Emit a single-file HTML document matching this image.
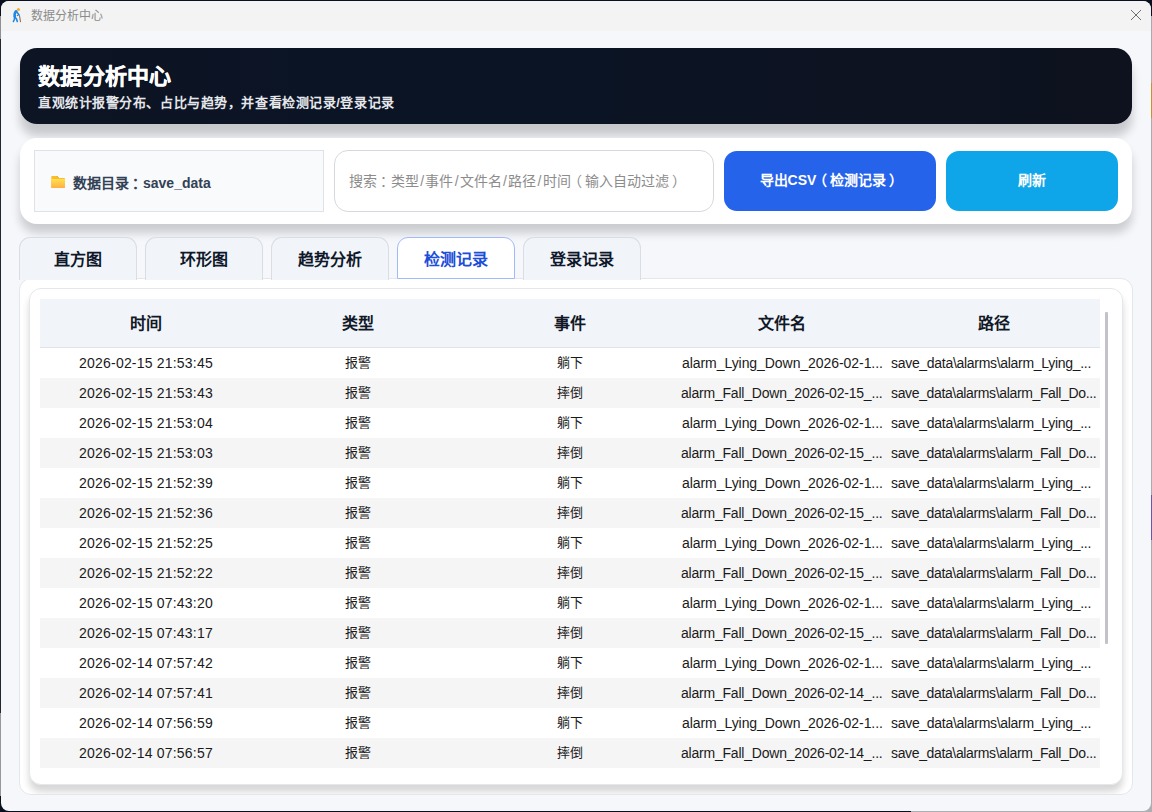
<!DOCTYPE html>
<html lang="zh-CN">
<head>
<meta charset="utf-8">
<title>数据分析中心</title>
<style>
*{box-sizing:border-box;margin:0;padding:0}
html,body{width:1152px;height:812px;overflow:hidden}
body{font-family:"Liberation Sans",sans-serif;background:#0a1020;position:relative;color:#111827}
.abs{position:absolute}
.e{position:absolute;width:1px}
#win{left:1px;top:1px;width:1150px;height:810px;border-radius:8px;background:#f5f7fb;overflow:hidden}
#titlebar{left:0;top:0;width:1150px;height:30px;background:#f3f3f3}
#titletext{left:30px;top:0;height:30px;line-height:30px;font-size:12px;color:#8b8b8b;white-space:nowrap}
#banner{left:19px;top:47px;width:1112px;height:76px;border-radius:17px;background:linear-gradient(90deg,#0d1424 0%,#0a1425 45%,#0c1322 62%,#0e121f 100%);box-shadow:0 12px 10px rgba(0,0,0,.19)}
#banner h1{position:absolute;left:18px;top:13px;font-size:22px;line-height:32px;font-weight:700;color:#fff;white-space:nowrap;letter-spacing:.3px;-webkit-text-stroke:.35px #fff}
#banner p{position:absolute;left:18px;top:45px;font-size:13px;line-height:20px;font-weight:700;color:#e5e7eb;white-space:nowrap;letter-spacing:.56px}
#bar{left:19px;top:137px;width:1112px;height:86px;border-radius:17px;background:#fff;box-shadow:0 9px 10px rgba(0,0,0,.175)}
#dir{left:14px;top:12px;width:290px;height:62px;background:#f8fafc;border:1px solid #dfe2e7;font-size:14px;font-weight:700;color:#334155;white-space:nowrap}
#dir span.t{position:absolute;left:38px;top:1px;line-height:62px}
#search{left:314px;top:12px;width:380px;height:62px;border-radius:14px;background:#fff;border:1px solid #d6d8dd;font-size:14px;color:#8c8c8c;line-height:60px;padding-left:14px;white-space:nowrap}
.sl{margin:0 1.25px}
.qc{position:relative;left:3px}.ql{position:relative;left:-3px}.qr{position:relative;left:3px}
.btn{top:13px;height:60px;border-radius:13px;color:#fff;font-size:14px;font-weight:700;text-align:center;line-height:59px;white-space:nowrap}
#b1{left:704px;width:212px;background:#2563eb}
#b2{left:926px;width:172px;background:#0ea5e9}
.tab{top:236px;z-index:2;width:118px;height:43px;border:1px solid #dadee4;border-bottom:none;border-radius:11px 11px 0 0;background:#f1f5f9;font-size:16px;font-weight:700;color:#0f172a;text-align:center;line-height:43px;white-space:nowrap}
.tab.on{height:42px;background:#fff;border:1px solid #9dbcf8;color:#1d4ed8}
#pane{left:18px;top:277px;width:1114px;height:517px;border-radius:12px;background:#fff;border:1px solid #e3e6ea;overflow:hidden}
#card{left:9px;top:9px;width:1094px;height:497px;border-radius:12px;background:#fff;border:1px solid #e6e7ea;box-shadow:0 7px 7px rgba(0,0,0,.16)}
#tbl{left:39px;top:298px;width:1060px;height:470px;background:#fff;overflow:hidden}
#thead{left:0;top:0;width:1060px;height:49px;background:#f1f5f9;border-bottom:1px solid #dfe4ea}
.th{position:absolute;top:0;width:212px;height:48px;line-height:49px;text-align:center;font-size:16px;font-weight:700;color:#111827}
.row{position:absolute;left:0;width:1060px;height:30px}
.row.alt{background:#f5f5f5}
.c{position:absolute;top:0;width:212px;height:30px;line-height:30px;text-align:center;font-size:14px;color:#1a1a1a;white-space:nowrap;overflow:hidden}
.dt{letter-spacing:.2px}
.k{font-size:13px}
.t{text-align:left;width:auto;overflow:visible}
.fl{left:642px;letter-spacing:-.06px}.ff{left:641px;letter-spacing:-.21px}
.pl{left:851px;letter-spacing:-.3px}.pf{left:851px;letter-spacing:-.36px}
#sb{left:1104px;top:311px;width:3px;height:332px;background:#c2c2c8;border-radius:1px}
</style>
</head>
<body>
<div class="e" style="left:0;top:16px;height:23px;background:#8f9094"></div>
<div class="e" style="left:0;top:39px;height:674px;background:#24272d"></div>
<div class="e" style="left:0;top:713px;height:83px;background:#97989b"></div>
<div class="e" style="left:1151px;top:16px;height:796px;background:#a9aaad"></div>
<div class="abs" style="left:911px;top:811px;width:241px;height:1px;background:#adaeb1"></div>
<div class="abs" style="left:1142px;top:802px;width:10px;height:10px;background:#adaeb1"></div>
<div class="e" style="left:1151px;top:83px;height:35px;background:#c4952f"></div>
<div class="e" style="left:1151px;top:495px;height:45px;background:#6c55ad"></div>
<div id="win" class="abs">
  <div id="titlebar" class="abs"></div>
  <svg class="abs" style="left:7px;top:3px" width="20" height="22" viewBox="8 4 20 22"><g fill="none" stroke-linecap="round" stroke-linejoin="round"><path d="M19.6 16.4L20.5 21.6" stroke="#8d6e63" stroke-width="1.1"/><circle cx="17.4" cy="15.5" r=".7" fill="#8d6e63" stroke="none"/><path d="M15.9 11.4C14.9 12.6 14.4 14.5 14.6 16.3" stroke="#1e88e5" stroke-width="2.7"/><path d="M16.4 11.3L19.2 15.3" stroke="#1e88e5" stroke-width="1.5"/><path d="M14.8 16.6L16.6 19.2L17.3 21.5" stroke="#1e88e5" stroke-width="1.6"/><path d="M14.7 17L14.4 19.2L13.4 21.5" stroke="#1e88e5" stroke-width="1.6"/><circle cx="18.4" cy="9.55" r="1.55" fill="#ffa726" stroke="none"/></g></svg>
  <div id="titletext" class="abs">数据分析中心</div>
  <svg class="abs" style="left:1129px;top:8px" width="12" height="12" viewBox="0 0 12 12"><path d="M1 1L11 11M11 1L1 11" stroke="#6f6f6f" stroke-width="1" fill="none"/></svg>
  <div id="banner" class="abs"><h1>数据分析中心</h1><p>直观统计报警分布、占比与趋势，并查看检测记录/登录记录</p></div>
  <div id="bar" class="abs">
    <div id="dir" class="abs">
      <svg class="abs" style="left:15px;top:24px" width="16" height="14" viewBox="0 0 16 14"><defs><linearGradient id="fg" x1="0" y1="0" x2="0" y2="1"><stop offset="0" stop-color="#ffe54a"/><stop offset=".25" stop-color="#ffd54f"/><stop offset="1" stop-color="#ffb041"/></linearGradient></defs><path d="M1.3 1.4Q1.3.9 1.8.9H7.3L9 3H14.4Q14.9 3 14.9 3.5V12.4Q14.9 12.9 14.4 12.9H1.8Q1.3 12.9 1.3 12.4Z" fill="#fcbc2e"/><path d="M6.2.9H7.3L9 3H7.9Z" fill="#e5ad2c"/><rect x="1.3" y="3.9" width="13.6" height="9" rx=".5" fill="url(#fg)"/></svg>
      <span class="t">数据目录<span class="qc">：</span>save_data</span>
    </div>
    <div id="search" class="abs">搜索<span class="qc">：</span>类型<span class="sl">/</span>事件<span class="sl">/</span>文件名<span class="sl">/</span>路径<span class="sl">/</span>时间<span class="ql">（</span>输入自动过滤<span class="qr">）</span></div>
    <div id="b1" class="abs btn">导出CSV<span class="ql">（</span>检测记录<span class="qr">）</span></div>
    <div id="b2" class="abs btn">刷新</div>
  </div>
  <div class="abs tab" style="left:18px">直方图</div>
  <div class="abs tab" style="left:144px">环形图</div>
  <div class="abs tab" style="left:270px">趋势分析</div>
  <div class="abs tab on" style="left:396px">检测记录</div>
  <div class="abs tab" style="left:522px">登录记录</div>
  <div id="pane" class="abs"><div id="card" class="abs"></div></div>
  <div id="tbl" class="abs">
    <div id="thead" class="abs">
      <div class="th" style="left:0">时间</div><div class="th" style="left:212px">类型</div><div class="th" style="left:424px">事件</div><div class="th" style="left:636px">文件名</div><div class="th" style="left:848px">路径</div>
    </div>
    <div class="row" style="top:49px"><div class="c dt" style="left:0">2026-02-15 21:53:45</div><div class="c k" style="left:212px">报警</div><div class="c k" style="left:424px">躺下</div><div class="c t fl">alarm_Lying_Down_2026-02-1...</div><div class="c t pl">save_data\alarms\alarm_Lying_...</div></div>
    <div class="row alt" style="top:79px"><div class="c dt" style="left:0">2026-02-15 21:53:43</div><div class="c k" style="left:212px">报警</div><div class="c k" style="left:424px">摔倒</div><div class="c t ff">alarm_Fall_Down_2026-02-15_...</div><div class="c t pf">save_data\alarms\alarm_Fall_Do...</div></div>
    <div class="row" style="top:109px"><div class="c dt" style="left:0">2026-02-15 21:53:04</div><div class="c k" style="left:212px">报警</div><div class="c k" style="left:424px">躺下</div><div class="c t fl">alarm_Lying_Down_2026-02-1...</div><div class="c t pl">save_data\alarms\alarm_Lying_...</div></div>
    <div class="row alt" style="top:139px"><div class="c dt" style="left:0">2026-02-15 21:53:03</div><div class="c k" style="left:212px">报警</div><div class="c k" style="left:424px">摔倒</div><div class="c t ff">alarm_Fall_Down_2026-02-15_...</div><div class="c t pf">save_data\alarms\alarm_Fall_Do...</div></div>
    <div class="row" style="top:169px"><div class="c dt" style="left:0">2026-02-15 21:52:39</div><div class="c k" style="left:212px">报警</div><div class="c k" style="left:424px">躺下</div><div class="c t fl">alarm_Lying_Down_2026-02-1...</div><div class="c t pl">save_data\alarms\alarm_Lying_...</div></div>
    <div class="row alt" style="top:199px"><div class="c dt" style="left:0">2026-02-15 21:52:36</div><div class="c k" style="left:212px">报警</div><div class="c k" style="left:424px">摔倒</div><div class="c t ff">alarm_Fall_Down_2026-02-15_...</div><div class="c t pf">save_data\alarms\alarm_Fall_Do...</div></div>
    <div class="row" style="top:229px"><div class="c dt" style="left:0">2026-02-15 21:52:25</div><div class="c k" style="left:212px">报警</div><div class="c k" style="left:424px">躺下</div><div class="c t fl">alarm_Lying_Down_2026-02-1...</div><div class="c t pl">save_data\alarms\alarm_Lying_...</div></div>
    <div class="row alt" style="top:259px"><div class="c dt" style="left:0">2026-02-15 21:52:22</div><div class="c k" style="left:212px">报警</div><div class="c k" style="left:424px">摔倒</div><div class="c t ff">alarm_Fall_Down_2026-02-15_...</div><div class="c t pf">save_data\alarms\alarm_Fall_Do...</div></div>
    <div class="row" style="top:289px"><div class="c dt" style="left:0">2026-02-15 07:43:20</div><div class="c k" style="left:212px">报警</div><div class="c k" style="left:424px">躺下</div><div class="c t fl">alarm_Lying_Down_2026-02-1...</div><div class="c t pl">save_data\alarms\alarm_Lying_...</div></div>
    <div class="row alt" style="top:319px"><div class="c dt" style="left:0">2026-02-15 07:43:17</div><div class="c k" style="left:212px">报警</div><div class="c k" style="left:424px">摔倒</div><div class="c t ff">alarm_Fall_Down_2026-02-15_...</div><div class="c t pf">save_data\alarms\alarm_Fall_Do...</div></div>
    <div class="row" style="top:349px"><div class="c dt" style="left:0">2026-02-14 07:57:42</div><div class="c k" style="left:212px">报警</div><div class="c k" style="left:424px">躺下</div><div class="c t fl">alarm_Lying_Down_2026-02-1...</div><div class="c t pl">save_data\alarms\alarm_Lying_...</div></div>
    <div class="row alt" style="top:379px"><div class="c dt" style="left:0">2026-02-14 07:57:41</div><div class="c k" style="left:212px">报警</div><div class="c k" style="left:424px">摔倒</div><div class="c t ff">alarm_Fall_Down_2026-02-14_...</div><div class="c t pf">save_data\alarms\alarm_Fall_Do...</div></div>
    <div class="row" style="top:409px"><div class="c dt" style="left:0">2026-02-14 07:56:59</div><div class="c k" style="left:212px">报警</div><div class="c k" style="left:424px">躺下</div><div class="c t fl">alarm_Lying_Down_2026-02-1...</div><div class="c t pl">save_data\alarms\alarm_Lying_...</div></div>
    <div class="row alt" style="top:439px"><div class="c dt" style="left:0">2026-02-14 07:56:57</div><div class="c k" style="left:212px">报警</div><div class="c k" style="left:424px">摔倒</div><div class="c t ff">alarm_Fall_Down_2026-02-14_...</div><div class="c t pf">save_data\alarms\alarm_Fall_Do...</div></div>
  </div>
  <div id="sb" class="abs"></div>
</div>
</body>
</html>
